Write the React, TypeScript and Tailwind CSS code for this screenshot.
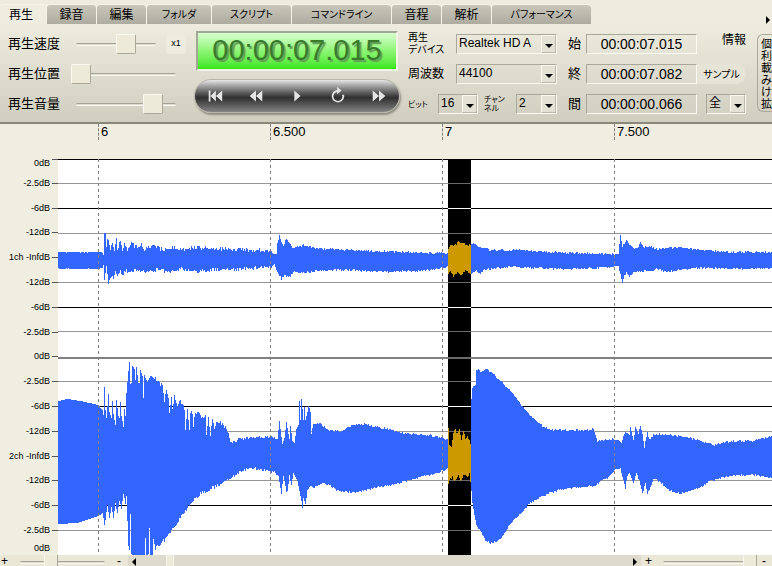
import React from 'react';

type Point = [number, number];

const PLOT = { x: 58, y: 159, width: 714, height: 396 };

const tabs = [
  { label: '再生', className: 'w-[46px] text-xs' },
  { label: '録音', className: 'w-[50px] text-xs' },
  { label: '編集', className: 'w-[50px] text-xs' },
  { label: 'フォルダ', className: 'w-[65px] text-[10px]' },
  { label: 'スクリプト', className: 'w-[80px] text-[10px]' },
  { label: 'コマンドライン', className: 'w-[100px] text-[10px]' },
  { label: '音程', className: 'w-[50px] text-xs' },
  { label: '解析', className: 'w-[50px] text-xs' },
  { label: 'パフォーマンス', className: 'w-[100px] text-[10px]' },
];

const marks = [
  { x: 98, label: '6' },
  { x: 270, label: '6.500' },
  { x: 442, label: '7' },
  { x: 614, label: '7.500' },
];

const levels = [
  '-2.5dB', '-6dB', '-12dB', '1ch -InfdB', '-12dB', '-6dB', '-2.5dB', '0dB',
  '-2.5dB', '-6dB', '-12dB', '2ch -InfdB', '-12dB', '-6dB', '-2.5dB',
];

const gridLines = [
  { y: 159, color: '#000000', h: 1 },
  { y: 183, color: '#969696', h: 1 },
  { y: 208, color: '#000000', h: 1 },
  { y: 233, color: '#969696', h: 1 },
  { y: 282, color: '#969696', h: 1 },
  { y: 307, color: '#000000', h: 1 },
  { y: 331, color: '#969696', h: 1 },
  { y: 357, color: '#808080', h: 2 },
  { y: 381, color: '#969696', h: 1 },
  { y: 406, color: '#000000', h: 1 },
  { y: 431, color: '#969696', h: 1 },
  { y: 480, color: '#969696', h: 1 },
  { y: 505, color: '#000000', h: 1 },
  { y: 530, color: '#969696', h: 1 },
];

const ch1Top: Point[] = [
  [58, 252], [101, 252], [103, 254], [104, 232], [105, 233], [106, 247], [107, 237], [108, 240], [110, 249], [112, 243],
  [114, 250], [116, 238], [117, 249], [120, 241], [122, 252], [124, 243], [127, 251], [130, 244], [132, 241], [134, 246],
  [136, 243], [138, 249], [141, 244], [143, 250], [148, 246], [155, 246], [163, 250], [170, 247], [180, 249], [195, 247],
  [210, 248], [230, 249], [260, 250], [270, 251], [274, 254], [276, 253], [277, 243], [279, 236], [283, 246], [286, 238],
  [290, 244], [293, 248], [303, 245], [316, 248], [333, 249], [377, 251], [410, 252], [447, 253], [448, 249], [450, 244],
  [454, 245], [458, 242], [463, 243], [468, 245], [471, 243], [475, 244], [480, 247], [490, 250], [520, 250], [550, 252],
  [580, 253], [613, 254], [618, 255], [620, 235], [622, 246], [624, 244], [626, 239], [629, 245], [633, 248], [637, 248],
  [640, 243], [644, 247], [650, 246], [657, 249], [663, 248], [680, 247], [700, 250], [733, 252], [772, 252],
];

const ch1Bottom: Point[] = [
  [58, 268], [98, 268], [103, 266], [104, 280], [106, 267], [108, 282], [109, 281], [111, 275], [113, 279], [115, 272],
  [117, 277], [120, 271], [122, 274], [126, 270], [130, 273], [134, 268], [139, 271], [148, 271], [160, 269], [170, 272],
  [180, 268], [195, 271], [210, 269], [230, 269], [260, 267], [270, 267], [274, 264], [277, 271], [281, 278], [284, 275],
  [290, 276], [293, 271], [303, 272], [317, 270], [343, 269], [390, 271], [423, 270], [447, 266], [448, 272], [451, 271],
  [453, 276], [457, 271], [460, 274], [465, 270], [471, 273], [476, 270], [480, 273], [484, 269], [510, 266], [550, 268],
  [580, 268], [613, 266], [618, 265], [620, 273], [622, 281], [624, 275], [626, 272], [629, 276], [633, 271], [640, 271],
  [650, 270], [657, 268], [666, 271], [680, 269], [700, 267], [733, 268], [772, 268],
];

const ch2Top: Point[] = [
  [58, 401], [67, 399], [80, 401], [98, 405], [102, 410], [103, 415], [104, 387], [105, 410], [106, 418], [108, 394],
  [109, 412], [111, 418], [112, 401], [113, 414], [115, 425], [116, 400], [118, 416], [119, 418], [120, 402], [121, 416],
  [123, 427], [124, 409], [125, 416], [126, 393], [128, 371], [129, 362], [130, 384], [131, 383], [132, 366], [134, 368],
  [135, 380], [136, 367], [138, 383], [139, 383], [140, 370], [142, 376], [143, 398], [144, 375], [147, 382], [150, 375],
  [154, 380], [155, 377], [157, 382], [162, 385], [164, 400], [166, 390], [168, 396], [169, 411], [171, 395], [172, 410],
  [174, 396], [177, 405], [179, 400], [182, 404], [184, 408], [185, 429], [187, 408], [189, 430], [190, 411], [192, 413],
  [193, 425], [195, 411], [202, 417], [205, 416], [206, 435], [208, 416], [210, 435], [212, 418], [214, 427], [217, 420],
  [223, 425], [227, 430], [230, 442], [240, 439], [250, 437], [273, 437], [277, 438], [279, 421], [282, 444], [284, 438],
  [286, 422], [289, 439], [290, 426], [292, 440], [294, 443], [296, 429], [298, 425], [299, 401], [300, 420], [301, 398],
  [303, 420], [304, 407], [305, 420], [307, 412], [308, 405], [310, 412], [311, 433], [313, 424], [320, 423], [328, 430],
  [340, 431], [353, 425], [365, 424], [383, 428], [403, 433], [430, 435], [447, 439], [448, 428], [449, 444], [451, 446],
  [453, 432], [455, 429], [457, 434], [459, 430], [461, 440], [463, 431], [465, 438], [467, 436], [470, 443], [471, 398],
  [472, 387], [475, 385], [476, 370], [478, 368], [480, 372], [485, 369], [490, 371], [495, 376], [502, 383], [510, 390],
  [523, 408], [534, 419], [543, 427], [553, 430], [590, 430], [593, 428], [597, 441], [613, 439], [621, 442], [625, 431],
  [629, 435], [630, 428], [633, 440], [635, 427], [638, 433], [640, 427], [642, 434], [644, 447], [647, 432], [649, 440],
  [653, 434], [657, 434], [683, 436], [697, 440], [713, 445], [730, 441], [750, 441], [772, 436],
];

const ch2Bottom: Point[] = [
  [58, 523], [77, 522], [98, 515], [102, 512], [104, 524], [105, 519], [107, 504], [109, 518], [111, 506], [113, 517],
  [115, 503], [117, 513], [119, 500], [121, 508], [123, 493], [125, 503], [126, 495], [127, 520], [128, 545], [129, 549],
  [130, 513], [131, 553], [132, 556], [144, 556], [145, 537], [146, 556], [148, 553], [149, 527], [150, 556], [152, 556],
  [153, 538], [155, 548], [160, 544], [170, 532], [180, 517], [190, 503], [200, 493], [217, 485], [230, 478], [238, 472],
  [250, 467], [260, 469], [275, 472], [278, 475], [281, 493], [283, 475], [286, 491], [287, 490], [289, 475], [291, 484],
  [293, 472], [297, 480], [300, 495], [302, 507], [303, 497], [305, 503], [307, 490], [310, 484], [313, 487], [323, 482],
  [330, 485], [337, 490], [355, 492], [373, 487], [397, 483], [417, 477], [437, 472], [447, 468], [448, 482], [450, 478],
  [452, 476], [454, 481], [458, 474], [460, 480], [464, 473], [467, 477], [469, 472], [471, 490], [472, 503], [476, 525],
  [480, 530], [485, 540], [490, 542], [497, 541], [502, 535], [510, 523], [520, 513], [530, 502], [547, 493], [563, 488],
  [593, 485], [607, 477], [615, 469], [620, 467], [622, 475], [625, 488], [627, 475], [629, 472], [633, 482], [636, 472],
  [639, 480], [642, 492], [645, 483], [647, 493], [650, 486], [653, 478], [657, 479], [670, 490], [680, 493], [697, 488],
  [710, 480], [730, 475], [753, 474], [772, 478],
];

function valueAt(points: Point[], x: number) {
  const i = points.findIndex((p) => p[0] >= x);
  if (i <= 0) return points[0][1];
  const [x0, y0] = points[i - 1];
  const [x1, y1] = points[i];
  return y0 + ((y1 - y0) * (x - x0)) / (x1 - x0);
}

// repeatable pseudo noise, centred a little inside the envelope
function noise(n: number) {
  const v = Math.sin(n * 127.1) * 43758.5453;
  return v - Math.floor(v) - 0.4;
}

function wavePath(top: Point[], bottom: Point[], from: number, to: number, rough: (x: number) => number) {
  const upper: string[] = [];
  const lower: string[] = [];
  for (let x = from; x < to; x++) {
    const r = rough(x);
    const t = Math.round(valueAt(top, x) + noise(x) * r);
    const b = Math.round(valueAt(bottom, x) - noise(x + 999) * r) + 1;
    upper.push(`V${t}H${x + 1}`);
    lower.unshift(`V${b}H${x}`);
  }
  return `M${from} ${valueAt(top, from)}${upper.join('')}${lower.join('')}Z`;
}

const rough1 = (x: number) => (x < 103 ? 1 : x < 270 ? 4 : 2);
const rough2 = (x: number) => {
  if (x < 103) return 0;
  if (x > 152 && x < 230) return 4;
  if (x > 230 && x < 278) return 3;
  return x < 310 ? 1 : 2;
};

const wave = (from: number, to: number) =>
  wavePath(ch1Top, ch1Bottom, from, to, rough1) + wavePath(ch2Top, ch2Bottom, from, to, rough2);

const Waveform: React.FC = () => (
  <svg
    className="block w-full h-[396px] bg-white"
    viewBox={`${PLOT.x} ${PLOT.y} ${PLOT.width} ${PLOT.height}`}
    preserveAspectRatio="none"
    shapeRendering="crispEdges"
    role="img"
    aria-label="波形"
  >
    {gridLines.map((l) => (
      <rect key={l.y} x={PLOT.x} y={l.y} width={PLOT.width} height={l.h} fill={l.color} />
    ))}
    <path d={wave(58, 448)} fill="#3366ff" />
    <path d={wave(471, 772)} fill="#3366ff" />
    {marks.map((m) => (
      <line key={m.x} x1={m.x + 0.5} x2={m.x + 0.5} y1={159} y2={552} stroke="#808080" strokeDasharray="3 3" />
    ))}
    {/* Selection */}
    <rect x={448} y={160} width={23} height={395} fill="#000000" />
    {gridLines.slice(1).map((l) => (
      <rect key={l.y} x={448} y={l.y} width={23} height={l.h} fill={l.color === '#000000' ? '#ffffff' : '#696969'} />
    ))}
    <path d={wave(448, 471)} fill="#cc9900" />
  </svg>
);

interface SliderProps {
  id: string;
  label?: string;
  value: number;
  className: string;
}
const Slider: React.FC<SliderProps> = ({ id, label, value, className }) => (
  <input
    id={id}
    type="range"
    aria-label={label}
    defaultValue={value}
    className={`h-5 appearance-none bg-transparent [&::-webkit-slider-runnable-track]:h-[3px] [&::-webkit-slider-runnable-track]:rounded-sm [&::-webkit-slider-runnable-track]:border-t [&::-webkit-slider-runnable-track]:border-t-[#a6a497] [&::-webkit-slider-runnable-track]:border-b [&::-webkit-slider-runnable-track]:border-b-[#fbfaf2] [&::-webkit-slider-runnable-track]:bg-[#dedccf] [&::-webkit-slider-thumb]:appearance-none [&::-webkit-slider-thumb]:-mt-[10px] [&::-webkit-slider-thumb]:h-5 [&::-webkit-slider-thumb]:rounded-[2px] [&::-webkit-slider-thumb]:border [&::-webkit-slider-thumb]:border-t-[#fbfaf2] [&::-webkit-slider-thumb]:border-l-[#fbfaf2] [&::-webkit-slider-thumb]:border-r-[#aaa89b] [&::-webkit-slider-thumb]:border-b-[#aaa89b] [&::-webkit-slider-thumb]:bg-[#edead9] ${className}`}
  />
);

interface SelectProps {
  id: string;
  label?: string;
  value: string;
  className: string;
}
const Select: React.FC<SelectProps> = ({ id, label, value, className }) => (
  <div className={`relative h-5 border border-t-[#aaa89b] border-l-[#aaa89b] border-r-[#fbfaf2] border-b-[#fbfaf2] ${className}`}>
    <select id={id} aria-label={label} className="block h-4 w-full appearance-none truncate bg-transparent pl-[2px] pr-4 text-xs leading-4">
      <option>{value}</option>
    </select>
    <span className="pointer-events-none absolute top-0 right-0 bottom-0 flex w-[15px] items-center justify-center border border-t-[#fbfaf2] border-l-[#fbfaf2] border-r-[#bbb9ac] border-b-[#bbb9ac] bg-[#e4e2d4] pt-1">
      <svg viewBox="0 0 8 4" className="h-1 w-2 flex-none"><path d="M0 0h8L4 4z" /></svg>
    </span>
  </div>
);

const transport = [
  { label: '先頭へ', d: 'M3 4h2v12H3zM11 4v12L5 10zM18 4v12l-7-6z' },
  { label: '早戻し', d: 'M10 4v12l-7-6zM17 4v12l-7-6z' },
  { label: '再生', d: 'M7 4l7 6-7 6z' },
  { label: 'ループ', d: 'M9 0l5 4-5 4V5.500a5 5 0 1 0 5.500 3h2.300A7 7 0 1 1 9 3.200z' },
  { label: '早送り', d: 'M3 4l7 6-7 6zM10 4l7 6-7 6z' },
];

const times = [
  { id: 'start', label: '始', value: '00:00:07.015' },
  { id: 'end', label: '終', value: '00:00:07.082' },
  { id: 'length', label: '間', value: '00:00:00.066' },
];

export default function App() {
  return (
    <div className="w-full overflow-hidden bg-[#f0eee1] text-black [font-family:'Liberation_Sans','Noto_Sans_CJK_JP',sans-serif] [font-feature-settings:'palt']">
      {/* Control panel */}
      <header className="border-b-2 border-[#8a887b] bg-linear-to-b from-[#eeecdf] from-20% to-[#d0cebf]">
        <div className="flex items-end pt-1">
          <nav className="flex">
            {tabs.map((t, i) => (
              <button
                key={t.label}
                className={`h-5 whitespace-nowrap rounded-t-[4px] border-t border-[#f6f4e9] ${i === 0 ? 'bg-[#efede0] pr-1' : 'border-l bg-linear-to-b from-[#c9c7ba] to-[#aeaca0]'} ${t.className}`}
              >
                {t.label}
              </button>
            ))}
          </nav>
          <button aria-label="次へ" className="mr-[2px] ml-auto">
            <svg viewBox="0 0 4 8" className="h-2 w-1"><path d="M0 0l4 4-4 4z" /></svg>
          </button>
        </div>

        <div className="flex pt-[5px] pb-[3px] text-[13px]">
          {/* Sliders */}
          <div className="w-[186px] flex-none pl-2">
            <div className="flex h-[30px] items-center">
              <label htmlFor="speed" className="w-[68px]">再生速度</label>
              <Slider id="speed" value={67} className="w-[80px] [&::-webkit-slider-thumb]:w-5" />
              <button className="ml-[10px] h-5 w-5 rounded-[3px] bg-[#eeebdf] text-[9px]">x1</button>
            </div>
            <div className="flex h-[30px] items-center">
              <label htmlFor="position" className="w-[63px]">再生位置</label>
              <Slider id="position" value={0} className="w-[105px] [&::-webkit-slider-thumb]:w-5" />
            </div>
            <div className="flex h-[30px] items-center">
              <label htmlFor="volume" className="w-[68px]">再生音量</label>
              <Slider id="volume" value={84} className="w-[100px] [&::-webkit-slider-thumb]:w-5" />
            </div>
          </div>

          {/* Time display and transport */}
          <div className="ml-2 w-[206px] flex-none pt-[2px]">
            <output className="mx-[2px] flex h-10 items-center justify-center border-2 border-t-[#9fa893] border-l-[#9fa893] border-r-[#f3f2e6] border-b-[#f3f2e6] bg-linear-to-b from-[#d9ffd0] via-[#8bf573] to-[#35e60c] text-[29px] text-[#3a7a2c] [text-shadow:2px_2px_1px_#62a055]">
              00:00:07.015
            </output>
            <div className="mt-2 flex h-[34px] items-center rounded-full border border-[#b8b6aa] bg-linear-to-b from-[#e6e6e6] via-[#303030] via-55% to-[#858585] shadow-[1px_2px_2px_#8f8d82]">
              {transport.map((t) => (
                <button key={t.label} aria-label={t.label} className="flex flex-1 justify-center">
                  <svg viewBox="0 0 20 20" className="h-[18px] w-[18px] fill-[#e4e4e4]"><path d={t.d} /></svg>
                </button>
              ))}
            </div>
          </div>

          {/* Device */}
          <div className="ml-2 w-[149px] flex-none">
            <div className="flex h-[30px] items-center">
              <label htmlFor="device" className="w-12 text-[10px] leading-[12px]">再生<br />デバイス</label>
              <Select id="device" value="Realtek HD A" className="w-[101px]" />
            </div>
            <div className="flex h-[30px] items-center">
              <label htmlFor="rate" className="w-12 text-xs">周波数</label>
              <Select id="rate" value="44100" className="w-[101px]" />
            </div>
            <div className="flex h-[30px] items-center text-[8px] leading-[9px]">
              <label htmlFor="bits" className="w-[30px]">ビット</label>
              <Select id="bits" value="16" className="w-10" />
              <label htmlFor="channels" className="ml-[6px] w-8">チャン<br />ネル</label>
              <Select id="channels" value="2" className="w-[41px]" />
            </div>
          </div>

          {/* Range */}
          <div className="ml-[11px] w-[129px] flex-none">
            {times.map((t) => (
              <div key={t.id} className="flex h-[30px] items-center">
                <label htmlFor={t.id} className="w-[18px]">{t.label}</label>
                <input
                  id={t.id}
                  readOnly
                  value={t.value}
                  className="h-5 w-[111px] border border-t-[#aaa89b] border-l-[#aaa89b] border-r-[#fbfaf2] border-b-[#fbfaf2] text-center text-sm"
                />
              </div>
            ))}
          </div>

          <div className="w-[49px] flex-none">
            <div className="flex h-[30px] items-start justify-end pt-[3px]">
              <button className="text-xs">情報</button>
            </div>
            <div className="flex h-[30px] items-center">
              <button className="h-5 w-[49px] rounded-r-full bg-[#e6e4d6] text-[10px]">サンプル</button>
            </div>
            <div className="flex h-[30px] items-center justify-end">
              <Select id="unit" label="単位" value="全" className="w-10" />
            </div>
          </div>

          <p className="mt-[5px] ml-[11px] h-[78px] min-w-[15px] flex-1 overflow-hidden rounded-l-md border border-r-0 border-[#aaa89b] pt-[3px] pl-[3px] text-[11px] leading-[12px] whitespace-nowrap">
            個<br />利<br />載<br />み<br />け<br />拡
          </p>
        </div>
      </header>

      {/* Time ruler */}
      <div className="ml-[58px] h-[35px]">
        <div className="relative h-4">
          {marks.map((m) => (
            <span
              key={m.x}
              className="absolute top-0 border-l border-dashed border-[#808080] pl-[2px] text-[13px] leading-4"
              style={{ left: `${((m.x - PLOT.x) / PLOT.width) * 100}%` }}
            >
              {m.label}
            </span>
          ))}
        </div>
      </div>

      {/* Waveform with level scale */}
      <main className="flex">
        <ul className="flex h-[396px] w-[58px] flex-none flex-col text-[9px] leading-[9px]">
          <li className="flex h-3 items-start justify-end gap-[2px]">
            <span>0dB</span>
            <span className="h-px w-[6px] bg-[#555555]" />
          </li>
          {levels.map((l, i) => (
            <li key={i} className="flex flex-1 items-center justify-end gap-[2px] whitespace-nowrap">
              <span>{l}</span>
              <span className="h-px w-[6px] bg-[#555555]" />
            </li>
          ))}
          <li className="flex h-3 items-center justify-end pr-2">0dB</li>
        </ul>
        <div className="min-w-0 flex-1">
          <Waveform />
        </div>
      </main>

      {/* Zoom sliders and scroll bar */}
      <footer className="flex h-[11px] items-start overflow-hidden bg-[#eae7d7] text-xs leading-3">
        <div className="flex w-32 flex-none items-start pl-[1px]">
          <button aria-label="縦拡大" className="w-[19px] text-left">+</button>
          <Slider id="vzoom" label="縦ズーム" value={34} className="-mt-[3px] w-[85px] [&::-webkit-slider-thumb]:w-[14px]" />
          <button aria-label="縦縮小" className="ml-3">-</button>
        </div>
        <div className="flex h-full min-w-0 flex-1 items-end bg-[#dedbcc]">
          <button aria-label="左へ" className="ml-1 w-[34px]">
            <svg viewBox="0 0 4 8" className="h-2 w-1"><path d="M4 0L0 4l4 4z" /></svg>
          </button>
          <div className="h-full w-2 border-x border-[#f8f6ea] bg-[#edead9]" />
          <button aria-label="右へ" className="mr-1 ml-auto">
            <svg viewBox="0 0 4 8" className="h-2 w-1"><path d="M0 0l4 4-4 4z" /></svg>
          </button>
        </div>
        <div className="flex w-[131px] flex-none items-start pl-1">
          <button aria-label="横拡大" className="w-[18px] text-left">+</button>
          <Slider id="hzoom" label="横ズーム" value={100} className="-mt-[3px] w-[94px] [&::-webkit-slider-thumb]:w-[14px]" />
          <button aria-label="横縮小" className="ml-[5px]">-</button>
        </div>
      </footer>
    </div>
  );
}
